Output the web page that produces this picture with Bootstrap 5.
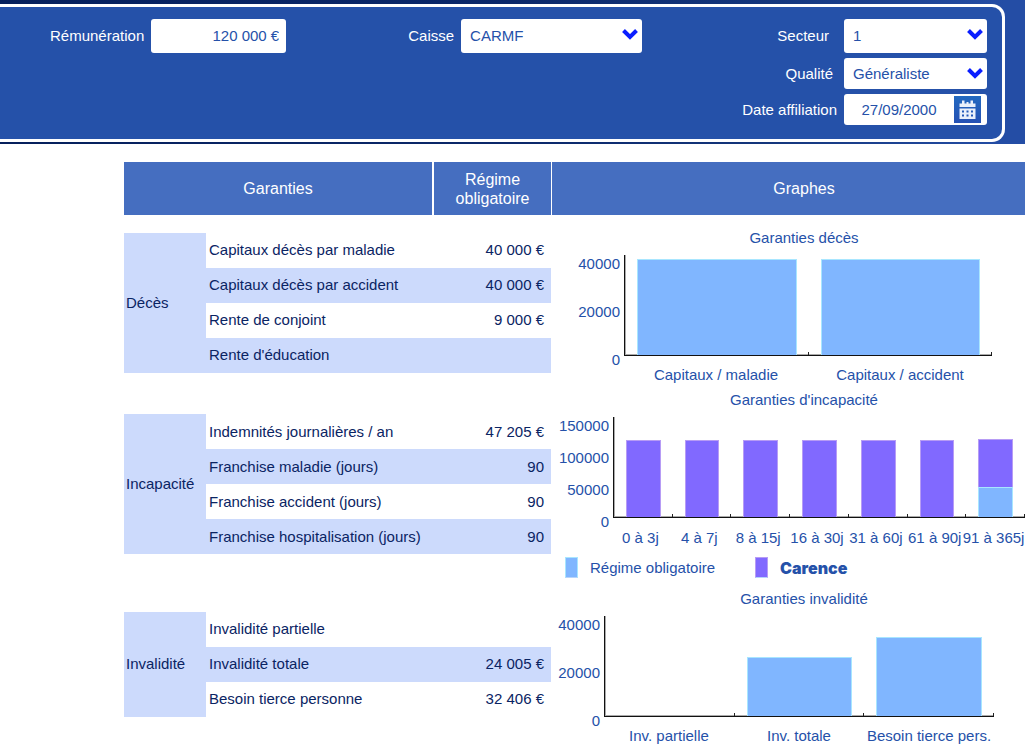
<!DOCTYPE html>
<html lang="fr">
<head>
<meta charset="utf-8">
<meta name="viewport" content="width=device-width, initial-scale=1">
<title>Garanties du régime obligatoire</title>
<link rel="stylesheet" href="https://cdn.jsdelivr.net/npm/bootstrap@5.3.0/dist/css/bootstrap.min.css">
<style>
:root { --royal: #2551a9; --navy: #0a2463; --band: #456ec0; --pale: #ccdafc; }
body { font: 15px/16px "Liberation Sans", Arial, sans-serif; color: var(--navy); overflow-x: hidden; }

/* Criteria panel */
.criteria { background: linear-gradient(to right, #06205c 0%, #0b286a 50%, #14367c 75%, #244da5 98%); padding: 4px 20px 2px 0; }
.criteria-box { background: var(--royal); color: #fff; border: 3px solid #fff; border-left: 0; border-radius: 0 13px 13px 0; padding: 12px 15px 14px 50px; }
.criteria .form-control, .criteria .form-select { font-size: 15px; line-height: 16px; color: var(--royal); border: 0; border-radius: 3px; height: 31px; padding: 0 9px; }
.criteria .tall { height: 34px; }
.criteria .form-control.amount { width: 135px; padding: 0 7px 2px; }
.criteria .form-select { background: #fff url("data:image/svg+xml,%3Csvg xmlns='http://www.w3.org/2000/svg' viewBox='0 0 16 11'%3E%3Cpath d='M1.500 1.500 8 8l6.500-6.500' fill='none' stroke='%230a1eff' stroke-width='4'/%3E%3C/svg%3E") no-repeat right 4px top 10px / 16px 11px; }
.fund { margin-left: 122px; }
.criteria .fund .form-select { width: 181px; }
.profile { display: grid; grid-template-columns: auto 143px; row-gap: 5px; align-items: center; }
.profile label { justify-self: end; }
.gap-a { margin-right: 15px; } .gap-b { margin-right: 11px; } .gap-c { margin-right: 7px; }
.date-field { background: #fff; border-radius: 3px; padding-right: 6px; }
.criteria .date-field .form-control { padding: 0; text-align: center; background: none; }
.cal-btn { flex: none; width: 27px; height: 27px; padding: 0; border: 0; background: linear-gradient(#2269c0, #2551b4); }
.cal-btn svg { display: block; }

/* Results */
.results { margin: 18px 0 0 124px; }
.split { display: grid; grid-template-columns: 427px minmax(0, 1fr); column-gap: 1px; }
.split-head { color: #fff; font-size: 16px; line-height: 19px; text-align: center; }
.cover-head { column-gap: 2px; }
.cover-head > div, .graph-head { background: var(--band); min-height: 53px; }
.due-head { width: 117px; }
.graph-head, .graph-title { padding-left: 31px; }
.tables { padding-top: 18px; }
.cover { width: 100%; margin: 0; border-collapse: collapse; }
.cover td, .cover th { height: 35px; padding: 0 7px 0 3px; vertical-align: middle; font-weight: 400; }
.cover-1 td, .cover-3 td, .cover-3 th { padding-bottom: 1px; }
.cover .family { width: 82px; background: var(--pale); padding-left: 2px; padding-right: 2px; }
.cover .tint { background: var(--pale); }
.cover-2 { margin-top: 41px; } .cover-3 { margin-top: 58px; }

/* Charts */
.graphs { color: var(--royal); padding-top: 15px; }
.graph-title { text-align: center; font-size: 15px; line-height: 16px; margin: 0 0 9px; }
.graph { display: grid; grid-template-columns: 68px minmax(0, 1fr); column-gap: 4px; margin-bottom: 9px; }
.graph-1 { padding-right: 33px; }
.graph-2 { grid-template-columns: 57px minmax(0, 1fr); margin-bottom: 11px; }
.graph-3 { grid-template-columns: 48px minmax(0, 1fr); padding-right: 31px; }
.y-scale { height: 112px; margin-top: 1px; text-align: right; }
.plot { height: 101px; border-left: 1px solid #111; border-bottom: 1px solid #111; box-shadow: inset 1px -1px #aaa; }
.slot { flex: 1 1 0; position: relative; padding: 0 12px; }
.slot::after { content: ""; position: absolute; right: 0; bottom: 0; width: 1px; height: 3px; background: #222; }
.fill-blue { background: #80b6ff; border: 1px solid #a8e6ff; border-bottom: 0; }
.fill-violet { background: #8169ff; border: 1px solid #b79cf5; border-bottom: 0; }
.x-scale { margin-top: 11px; }
.x-scale span { flex: 1 1 0; min-width: 0; display: flex; justify-content: center; white-space: nowrap; }
.graph-2 .x-scale { margin: 12px 2px 0 -2px; }
.legend-row { padding-left: 13px; height: 21px; margin-bottom: 13px; }
.swatch { width: 13px; height: 21px; margin-right: 12px; }
.swatch.fill-blue, .swatch.fill-violet { border-bottom: 1px solid #b7d4fa; }
.waiting { margin-left: 40px; font-family: Inter, "DejaVu Sans", sans-serif; font-size: 16px; font-weight: 900; }
</style>
<script src="https://cdn.jsdelivr.net/npm/bootstrap@5.3.0/dist/js/bootstrap.bundle.min.js"></script>
</head>
<body>
<header class="criteria">
  <form class="criteria-box d-flex align-items-start">
    <div class="d-flex align-items-center">
      <label for="pay" class="gap-c">Rémunération</label>
      <input id="pay" type="text" class="form-control amount tall text-end" value="120 000 €">
    </div>
    <div class="fund d-flex align-items-center">
      <label for="fund" class="gap-c">Caisse</label>
      <select id="fund" class="form-select tall"><option>CARMF</option></select>
    </div>
    <div class="profile ms-auto">
      <label for="sector" class="gap-a">Secteur</label>
      <select id="sector" class="form-select tall"><option>1</option></select>
      <label for="role" class="gap-b">Qualité</label>
      <select id="role" class="form-select"><option>Généraliste</option></select>
      <label for="joined" class="gap-c">Date affiliation</label>
      <div class="date-field d-flex align-items-center">
        <input id="joined" type="text" class="form-control" value="27/09/2000">
        <button type="button" class="cal-btn" aria-label="Choisir une date">
          <svg width="27" height="27" viewBox="0 0 27 27" fill="#e9f0fb">
            <path d="M5.500 7.500h16v3.500h-16z"/>
            <path d="M8 4.500h2.500v4H8zM16.500 4.500H19v4h-2.500zM12.500 6h2v2h-2z"/>
            <path fill-rule="evenodd" d="M5.500 12.500h16v10.500h-16zM8 14.500v2h2v-2zm4.500 0v2h2v-2zm4.500 0v2h2v-2zM8 18.500v2h2v-2zm4.500 0v2h2v-2zm4.500 0v2h2v-2z"/>
          </svg>
        </button>
      </div>
    </div>
  </form>
</header>

<main class="results">
  <div class="split split-head">
    <div class="cover-head d-flex">
      <div class="flex-grow-1 d-flex align-items-center justify-content-center">Garanties</div>
      <div class="due-head d-flex align-items-center justify-content-center">Régime<br>obligatoire</div>
    </div>
    <div class="graph-head d-flex align-items-center justify-content-center">Graphes</div>
  </div>

  <div class="split align-items-start">
    <div class="tables">
      <table class="cover cover-1">
        <tr><th class="family" rowspan="4" scope="rowgroup">Décès</th><td>Capitaux décès par maladie</td><td class="text-end">40 000 €</td></tr>
        <tr class="tint"><td>Capitaux décès par accident</td><td class="text-end">40 000 €</td></tr>
        <tr><td>Rente de conjoint</td><td class="text-end">9 000 €</td></tr>
        <tr class="tint"><td>Rente d'éducation</td><td></td></tr>
      </table>
      <table class="cover cover-2">
        <tr><th class="family" rowspan="4" scope="rowgroup">Incapacité</th><td>Indemnités journalières / an</td><td class="text-end">47 205 €</td></tr>
        <tr class="tint"><td>Franchise maladie (jours)</td><td class="text-end">90</td></tr>
        <tr><td>Franchise accident (jours)</td><td class="text-end">90</td></tr>
        <tr class="tint"><td>Franchise hospitalisation (jours)</td><td class="text-end">90</td></tr>
      </table>
      <table class="cover cover-3">
        <tr><th class="family" rowspan="3" scope="rowgroup">Invalidité</th><td>Invalidité partielle</td><td></td></tr>
        <tr class="tint"><td>Invalidité totale</td><td class="text-end">24 005 €</td></tr>
        <tr><td>Besoin tierce personne</td><td class="text-end">32 406 €</td></tr>
      </table>
    </div>

    <div class="graphs">
      <h2 class="graph-title">Garanties décès</h2>
      <div class="graph graph-1">
        <div class="y-scale d-flex flex-column justify-content-between"><span>40000</span><span>20000</span><span>0</span></div>
        <div>
          <div class="plot d-flex">
            <div class="slot d-flex flex-column justify-content-end"><div class="fill-blue" style="height:96%"></div></div>
            <div class="slot d-flex flex-column justify-content-end"><div class="fill-blue" style="height:96%"></div></div>
          </div>
          <div class="x-scale d-flex"><span>Capitaux / maladie</span><span>Capitaux / accident</span></div>
        </div>
      </div>

      <h2 class="graph-title">Garanties d'incapacité</h2>
      <div class="graph graph-2">
        <div class="y-scale d-flex flex-column justify-content-between"><span>150000</span><span>100000</span><span>50000</span><span>0</span></div>
        <div>
          <div class="plot d-flex">
            <div class="slot d-flex flex-column justify-content-end"><div class="fill-violet" style="height:77%"></div></div>
            <div class="slot d-flex flex-column justify-content-end"><div class="fill-violet" style="height:77%"></div></div>
            <div class="slot d-flex flex-column justify-content-end"><div class="fill-violet" style="height:77%"></div></div>
            <div class="slot d-flex flex-column justify-content-end"><div class="fill-violet" style="height:77%"></div></div>
            <div class="slot d-flex flex-column justify-content-end"><div class="fill-violet" style="height:77%"></div></div>
            <div class="slot d-flex flex-column justify-content-end"><div class="fill-violet" style="height:77%"></div></div>
            <div class="slot d-flex flex-column justify-content-end"><div class="fill-violet" style="height:48%"></div><div class="fill-blue" style="height:30%"></div></div>
          </div>
          <div class="x-scale d-flex"><span>0 à 3j</span><span>4 à 7j</span><span>8 à 15j</span><span>16 à 30j</span><span>31 à 60j</span><span>61 à 90j</span><span>91 à 365j</span></div>
        </div>
      </div>
      <div class="legend-row d-flex align-items-center">
        <span class="swatch fill-blue"></span><span>Régime obligatoire</span>
        <span class="waiting d-flex align-items-center"><span class="swatch fill-violet"></span>Carence</span>
      </div>

      <h2 class="graph-title">Garanties invalidité</h2>
      <div class="graph graph-3 mb-0">
        <div class="y-scale d-flex flex-column justify-content-between"><span>40000</span><span>20000</span><span>0</span></div>
        <div>
          <div class="plot d-flex">
            <div class="slot"></div>
            <div class="slot d-flex flex-column justify-content-end"><div class="fill-blue" style="height:59%"></div></div>
            <div class="slot d-flex flex-column justify-content-end"><div class="fill-blue" style="height:79%"></div></div>
          </div>
          <div class="x-scale d-flex"><span>Inv. partielle</span><span>Inv. totale</span><span>Besoin tierce pers.</span></div>
        </div>
      </div>
    </div>
  </div>
</main>
</body>
</html>
